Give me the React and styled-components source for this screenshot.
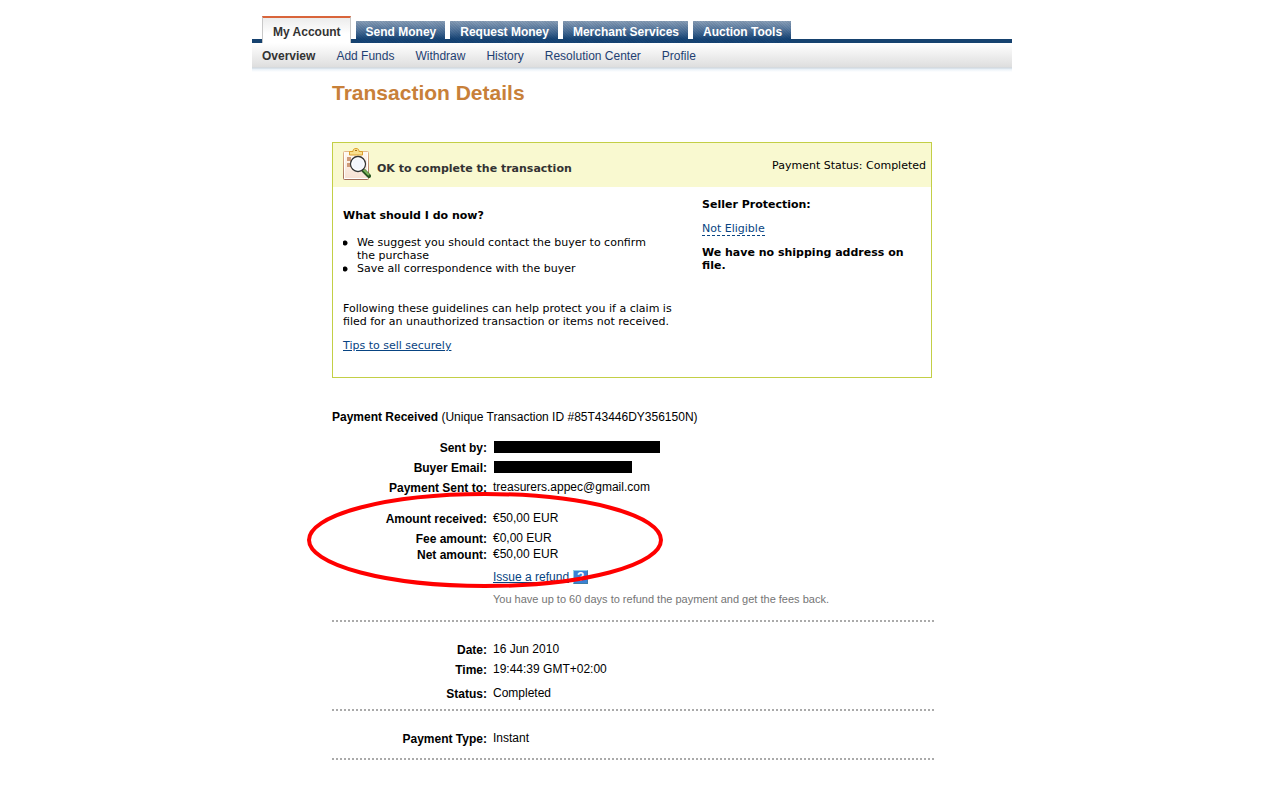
import React from 'react';
import styled, { createGlobalStyle, css } from 'styled-components';

const GlobalStyle = createGlobalStyle`
  body {
    margin: 0;
    background: #fff;
    color: #000;
    font-family: Arial, "Liberation Sans", sans-serif;
    font-size: 12px;
    line-height: 16px;
  }
`;

const Page = styled.div`
  max-width: 760px;
  margin: 0 auto;
  padding: 16px 16px 40px 0;
`;

const TabBar = styled.nav`
  display: flex;
  align-items: flex-end;
  gap: 5px;
  padding-left: 10px;
  background: linear-gradient(#16426f, #16426f) bottom / 100% 4px no-repeat;
`;

const hatch = 'repeating-linear-gradient(45deg, rgba(0, 20, 50, 0.08) 0 1px, transparent 1px 2px)';

const Tab = styled.a`
  padding: 3px 9px 3px 10px;
  font-weight: bold;
  text-decoration: none;
  white-space: nowrap;
  ${({ $active }) =>
    $active
      ? css`
          padding-top: 6px;
          border: 1px solid #c8c8c8;
          border-top: 2px solid #d9653b;
          border-bottom: 0;
          background: linear-gradient(#ececec, #fff 16px);
          color: #333;
        `
      : css`
          background: ${hatch}, linear-gradient(#8ba0b8, #5a7ba0 8px, #164475 18px);
          color: #fff;
        `}
`;

const SubNav = styled.nav`
  display: flex;
  gap: 21px;
  padding: 5px 10px 8px;
  background: linear-gradient(#fff, #f7f7f7 6px, #dedede 24px, #ccd6df 25px, #e8f0f7 26px, #fff 29px);
`;

const SubLink = styled.a`
  color: ${({ $active }) => ($active ? '#333' : '#1f3f72')};
  font-weight: ${({ $active }) => ($active ? 'bold' : 'normal')};
  text-decoration: none;
  white-space: nowrap;
`;

const Main = styled.main`
  margin: 0 80px;
`;

const Title = styled.h1`
  margin: 8px 0 36px;
  color: #c88039;
  font-size: 21px;
  line-height: 26px;
`;

const Panel = styled.section`
  border: 1px solid #c3cf46;
  font-family: Verdana, "DejaVu Sans", sans-serif;
  font-size: 11px;
  line-height: 13px;
`;

const PanelHeader = styled.header`
  display: flex;
  align-items: center;
  height: 44px;
  padding: 0 5px 0 10px;
  background: #f9f9d0;
`;

const PanelTitle = styled.h2`
  flex: 1;
  margin: 6px 0 0 6px;
  color: #333;
  font-size: 11px;
`;

const PanelBody = styled.div`
  display: grid;
  grid-template-columns: 343px 1fr;
  gap: 16px;
  padding: 11px 10px 25px;
`;

const Advice = styled.div`
  padding-top: 11px;
`;

const SubHeading = styled.h3`
  margin: 0;
  font-size: 11px;
`;

const TipList = styled.ul`
  margin: 14px 24px 27px 0;
  padding: 0;
  list-style: none;
`;

const Tip = styled.li`
  padding-left: 14px;
  background: radial-gradient(circle at 2px 7px, #000 2px, transparent 3px);
`;

const Text = styled.p`
  margin: 11px 0;
  font-weight: ${({ $bold }) => ($bold ? 'bold' : 'normal')};
`;

const Link = styled.a`
  color: #084482;
`;

const DashedLink = styled.a`
  border-bottom: 1px dashed #084482;
  color: #084482;
  text-decoration: none;
`;

const Summary = styled.p`
  margin: 31px 0 15px;
`;

const Details = styled.div`
  position: relative;
  margin-right: -2px;
`;

const Group = styled.dl`
  margin: 0;
  padding: ${({ $pad }) => $pad};
  border-bottom: 2px dotted #aaa;
`;

const Row = styled.div`
  display: grid;
  grid-template-columns: 155px 1fr;
  column-gap: 6px;
  margin-bottom: ${({ $gap = 4 }) => $gap}px;
`;

const Label = styled.dt`
  font-weight: bold;
  text-align: right;
`;

const Value = styled.dd`
  grid-column: 2;
  margin: -1px 0 0;
`;

const Redacted = styled.span`
  display: block;
  width: ${({ $width }) => $width}px;
  height: 12px;
  margin: 2px 1px;
  background: #000;
`;

const HelpButton = styled.button`
  width: 15px;
  height: 14px;
  margin: 1px 0 0 4px;
  padding: 0;
  border: 1px solid;
  border-color: #8ed0e8 #3f7fa8 #3f7fa8 #8ed0e8;
  background: #3b82d6;
  color: #fff;
  font: bold 12px/12px Arial, "Liberation Sans", sans-serif;
  vertical-align: top;
`;

const Hint = styled.span`
  color: #757575;
  font-size: 11px;
  vertical-align: top;
`;

const Highlight = styled.svg`
  position: absolute;
  top: 50px;
  left: -27px;
  pointer-events: none;
`;

const ClipboardIcon = () => (
  <svg width="28" height="34" viewBox="0 0 28 34" aria-hidden="true">
    <defs>
      <linearGradient id="board" x1="0" y1="0" x2="0" y2="1">
        <stop offset="0" stopColor="#fffaf3" />
        <stop offset="1" stopColor="#f7e0d2" />
      </linearGradient>
      <linearGradient id="edge" x1="0" y1="0" x2="0" y2="1">
        <stop offset="0" stopColor="#e3b88d" />
        <stop offset="1" stopColor="#a06c58" />
      </linearGradient>
    </defs>
    <rect x="0.5" y="3.5" width="25" height="28" rx="1" fill="url(#board)" stroke="url(#edge)" />
    <path d="M1.5 4.5v26M24.5 4.5v26M1.5 30.5h23" stroke="#fff" fill="none" />
    <rect x="4" y="9" width="4" height="4" fill="#cf9b79" />
    <rect x="4" y="15" width="4" height="4" fill="#cf9b79" />
    <path d="M6.5 7V3.5H10c0-2 .8-3 3-3s3 1 3 3h3.5V7z" fill="#f9df8e" stroke="#dba02c" />
    <path d="M12 2.5h2" stroke="#a96e14" />
    <path d="M20.5 22.500l5.500 5.500" stroke="#28541f" strokeWidth="4" strokeLinecap="round" />
    <path d="M20.5 21.500l5.500 5.500" stroke="#7cb45c" strokeWidth="2" />
    <circle cx="15" cy="16" r="7.500" fill="#eef4fb" stroke="#333" strokeWidth="1.300" />
    <circle cx="15" cy="16" r="6" fill="#f3f6fc" stroke="#fff" />
  </svg>
);

const tabs = ['My Account', 'Send Money', 'Request Money', 'Merchant Services', 'Auction Tools'];
const links = ['Overview', 'Add Funds', 'Withdraw', 'History', 'Resolution Center', 'Profile'];

const Detail = ({ label, gap, children }) => (
  <Row $gap={gap}>
    {label && <Label>{label}:</Label>}
    <Value>{children}</Value>
  </Row>
);

const App = () => (
  <>
    <GlobalStyle />
    <Page>
      <TabBar>
        {tabs.map((tab, i) => (
          <Tab key={tab} href="#" $active={i === 0}>{tab}</Tab>
        ))}
      </TabBar>
      <SubNav>
        {links.map((link, i) => (
          <SubLink key={link} href="#" $active={i === 0}>{link}</SubLink>
        ))}
      </SubNav>

      <Main>
        <Title>Transaction Details</Title>

        <Panel>
          <PanelHeader>
            <ClipboardIcon />
            <PanelTitle>OK to complete the transaction</PanelTitle>
            <span>Payment Status: Completed</span>
          </PanelHeader>
          <PanelBody>
            <Advice>
              <SubHeading>What should I do now?</SubHeading>
              <TipList>
                <Tip>We suggest you should contact the buyer to confirm the purchase</Tip>
                <Tip>Save all correspondence with the buyer</Tip>
              </TipList>
              <Text>
                Following these guidelines can help protect you if a claim is filed for an
                unauthorized transaction or items not received.
              </Text>
              <Link href="#">Tips to sell securely</Link>
            </Advice>
            <div>
              <SubHeading>Seller Protection:</SubHeading>
              <Text><DashedLink href="#">Not Eligible</DashedLink></Text>
              <Text $bold>We have no shipping address on file.</Text>
            </div>
          </PanelBody>
        </Panel>

        <Summary>
          <b>Payment Received</b> (Unique Transaction ID #85T43446DY356150N)
        </Summary>

        <Details>
          <Group $pad="0 0 13px">
            <Detail label="Sent by"><Redacted $width={166} /></Detail>
            <Detail label="Buyer Email"><Redacted $width={138} /></Detail>
            <Detail label="Payment Sent to" gap={15}>treasurers.appec@gmail.com</Detail>
            <Detail label="Amount received">€50,00 EUR</Detail>
            <Detail label="Fee amount" gap={0}>€0,00 EUR</Detail>
            <Detail label="Net amount" gap={7}>€50,00 EUR</Detail>
            <Detail gap={7}>
              <Link href="#">Issue a refund</Link>
              <HelpButton type="button" aria-label="Help">?</HelpButton>
            </Detail>
            <Detail gap={0}>
              <Hint>You have up to 60 days to refund the payment and get the fees back.</Hint>
            </Detail>
          </Group>
          <Group $pad="20px 0 7px">
            <Detail label="Date">16 Jun 2010</Detail>
            <Detail label="Time" gap={8}>19:44:39 GMT+02:00</Detail>
            <Detail label="Status" gap={0}>Completed</Detail>
          </Group>
          <Group $pad="20px 0 11px">
            <Detail label="Payment Type" gap={0}>Instant</Detail>
          </Group>
          <Highlight width="360" height="100" viewBox="0 0 360 100" aria-hidden="true">
            <ellipse cx="180" cy="50" rx="176" ry="46" fill="none" stroke="#f00" strokeWidth="4" />
          </Highlight>
        </Details>
      </Main>
    </Page>
  </>
);

export default App;
